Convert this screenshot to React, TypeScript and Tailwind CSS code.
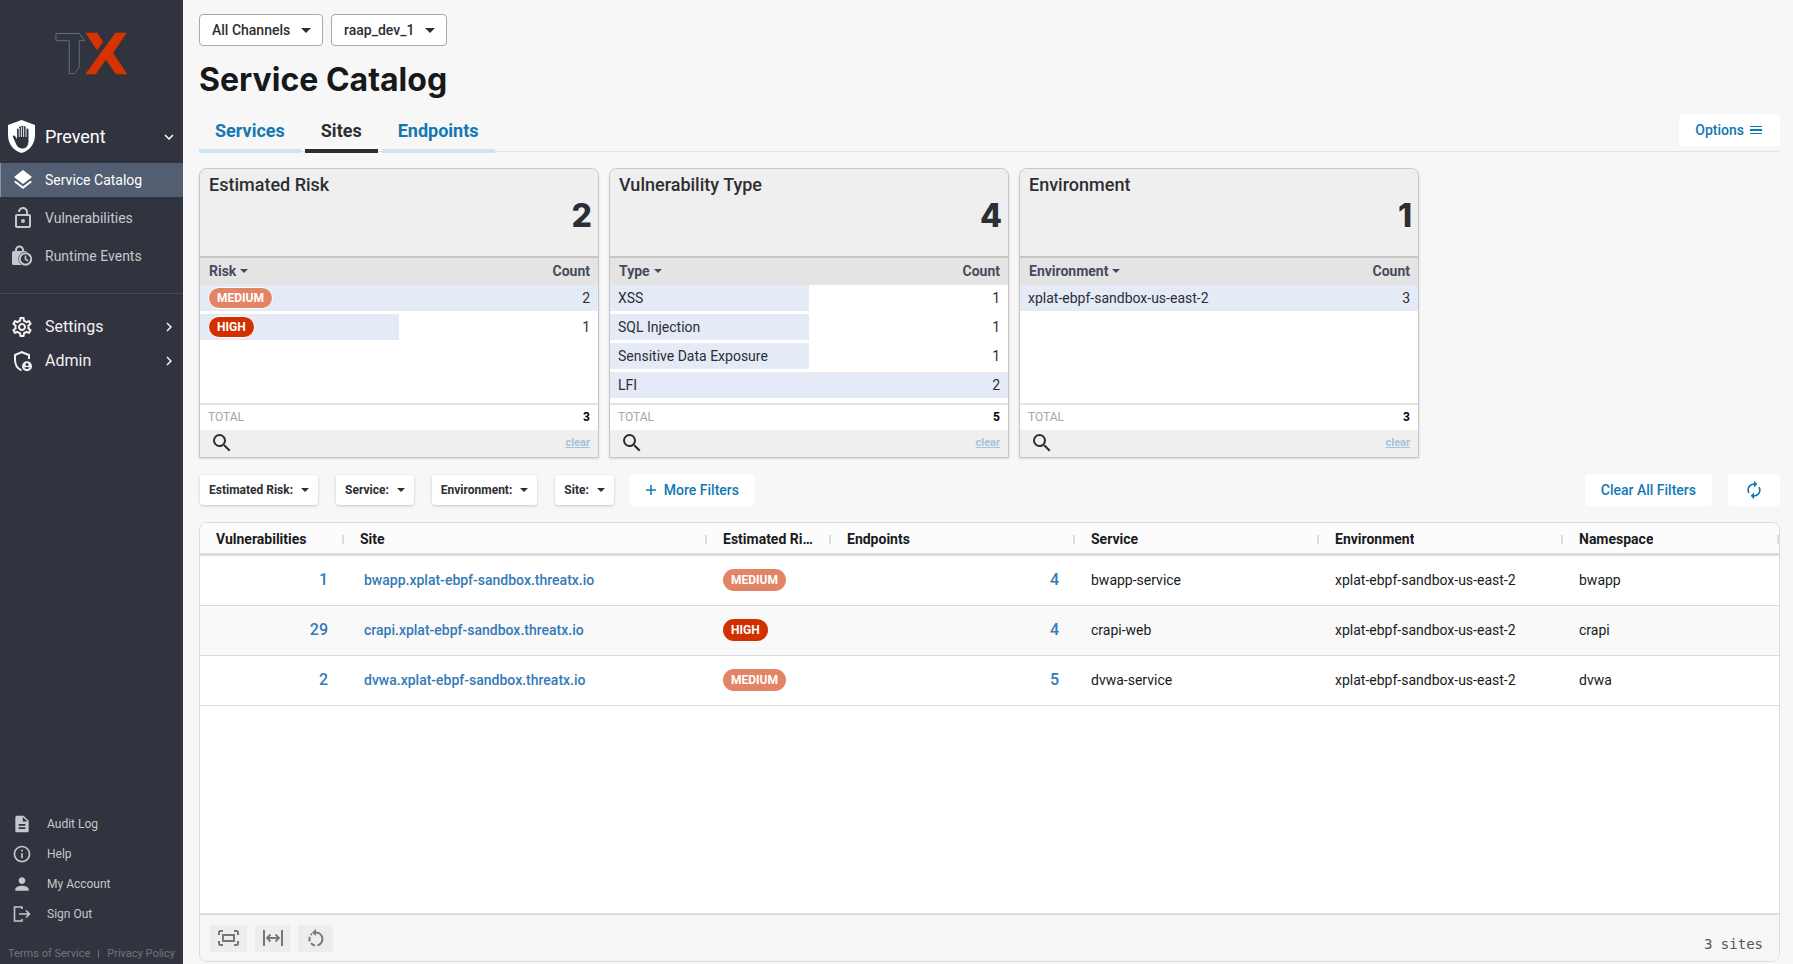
import type { ReactNode } from "react";
import { useState } from "react";
import {
  MdAutorenew,
  MdChevronRight,
  MdDescription,
  MdExpandMore,
  MdInfoOutline,
  MdLayers,
  MdOutlineLockOpen,
  MdOutlineSettings,
  MdPerson,
  MdSearch,
} from "react-icons/md";

type Level = "MEDIUM" | "HIGH";

const siteRows: { vulns: number; site: string; risk: Level; endpoints: number; service: string; env: string; ns: string }[] = [
  { vulns: 1, site: "bwapp.xplat-ebpf-sandbox.threatx.io", risk: "MEDIUM", endpoints: 4, service: "bwapp-service", env: "xplat-ebpf-sandbox-us-east-2", ns: "bwapp" },
  { vulns: 29, site: "crapi.xplat-ebpf-sandbox.threatx.io", risk: "HIGH", endpoints: 4, service: "crapi-web", env: "xplat-ebpf-sandbox-us-east-2", ns: "crapi" },
  { vulns: 2, site: "dvwa.xplat-ebpf-sandbox.threatx.io", risk: "MEDIUM", endpoints: 5, service: "dvwa-service", env: "xplat-ebpf-sandbox-us-east-2", ns: "dvwa" },
];

const facets = [
  {
    title: "Estimated Risk",
    column: "Risk",
    items: [
      { label: "MEDIUM", count: 2, badge: true },
      { label: "HIGH", count: 1, badge: true },
    ],
  },
  {
    title: "Vulnerability Type",
    column: "Type",
    items: [
      { label: "XSS", count: 1 },
      { label: "SQL Injection", count: 1 },
      { label: "Sensitive Data Exposure", count: 1 },
      { label: "LFI", count: 2 },
    ],
  },
  {
    title: "Environment",
    column: "Environment",
    items: [{ label: "xplat-ebpf-sandbox-us-east-2", count: 3 }],
  },
];

const columns = [
  { name: "Vulnerabilities", width: "w-[144px]" },
  { name: "Site", width: "w-[363px]" },
  { name: "Estimated Risk", width: "w-[124px]" },
  { name: "Endpoints", width: "w-[244px]" },
  { name: "Service", width: "w-[244px]" },
  { name: "Environment", width: "w-[244px]" },
  { name: "Namespace", width: "" },
];

function Logo() {
  return (
    <svg viewBox="163 95 220 129" className="w-[73px] h-[43px]" role="img" aria-label="TX">
      <path d="M166 99H236L252 121H236V202L221 220H206V121H166Z" fill="none" stroke="#57757d" strokeWidth="3" />
      <path d="M254 97H290L308 125L290 150Z" fill="#d63301" />
      <path d="M345 97H379L338 159L381 222H347L316 178L286 222H254Z" fill="#d63301" />
    </svg>
  );
}

function ShieldHand() {
  return (
    <svg viewBox="0 0 27 33" className="w-[27px] h-[33px]" aria-hidden="true">
      <path d="M13.5 0L27 5V15C27 24 21.500 30.800 13.500 33C5.500 30.800 0 24 0 15V5Z" fill="#fff" />
      <path
        d="M9 19V9.500a1 1 0 0 1 2 0V7.500a1 1 0 0 1 2.200 0V6.800a1 1 0 0 1 2.200 0V7.500a1 1 0 0 1 2.400 0V9.800a1 1 0 0 1 2.700 0V21C20.500 26 18 28.500 14.500 28.500C11.500 28.500 9.500 27 8.300 24.500L4.800 16.800C4.800 15.300 6.400 15.300 7.200 16.300Z"
        fill="#31333f"
      />
      <path d="M11.200 8V17M13.400 7V17M15.600 7V17M18 8.500V17" stroke="#fff" strokeWidth="0.900" />
    </svg>
  );
}

function LockClockIcon() {
  return (
    <svg viewBox="0 0 24 24" width="24" height="24" fill="none" stroke="currentColor" aria-hidden="true">
      <path d="M5 8V6A3.500 3.500 0 0 1 12 6V8" strokeWidth="2" />
      <rect x="1" y="7" width="15" height="14" rx="1.500" fill="currentColor" stroke="none" />
      <circle cx="14.500" cy="15" r="7.200" fill="#31333f" stroke="none" />
      <circle cx="14.500" cy="15" r="5.700" fill="#31333f" strokeWidth="2" />
      <path d="M14.500 11.500V15.200L17 16.700" strokeWidth="1.600" />
    </svg>
  );
}

function ShieldUserIcon() {
  return (
    <svg viewBox="0 0 24 24" width="24" height="24" fill="none" stroke="currentColor" strokeWidth="2" aria-hidden="true">
      <path d="M19 10V6L11.800 3.200L5 6V10.500C5 15.500 7.300 19.500 11.500 21.300" />
      <circle cx="17" cy="17.200" r="5" fill="currentColor" stroke="none" />
      <circle cx="17" cy="15.600" r="1.500" fill="#31333f" stroke="none" />
      <path d="M14.200 18.700Q17 17.300 19.800 18.700Q17 21.500 14.200 18.700Z" fill="#31333f" stroke="none" />
    </svg>
  );
}

function SignOutIcon() {
  return (
    <svg viewBox="0 0 20 20" width="20" height="20" fill="none" stroke="currentColor" strokeWidth="1.600" aria-hidden="true">
      <path d="M10 5V3H2.500V17H10V15M7 10H17.500M14 6.500L17.500 10L14 13.500" />
    </svg>
  );
}

function ResetIcon() {
  return (
    <svg viewBox="0 0 18 18" width="18" height="18" fill="none" stroke="currentColor" strokeWidth="2" aria-hidden="true">
      <path d="M8 3.500H9A6.500 6.500 0 0 1 10.500 16.300" />
      <path d="M8 16.400A6.500 6.500 0 0 1 4 14.200M2.800 12.300A6.500 6.500 0 0 1 2.800 7.900M3.800 6A6.500 6.500 0 0 1 5 4.800" />
      <path d="M9 0V7L5 3.500Z" fill="currentColor" stroke="none" />
    </svg>
  );
}

function Caret({ className }: { className: string }) {
  return (
    <svg viewBox="0 0 10 5" className={className} fill="currentColor" aria-hidden="true">
      <path d="M0 0H10L5 5Z" />
    </svg>
  );
}

function Badge({ level, outlined }: { level: string; outlined?: boolean }) {
  return (
    <span
      className={`inline-flex h-[22px] items-center rounded-full px-2 text-xs font-bold text-white ${
        outlined ? "border border-white" : ""
      } ${level === "HIGH" ? "bg-[#d13000]" : "bg-[#e48467]"}`}
    >
      {level}
    </span>
  );
}

function ChannelSelect({ label, value }: { label: string; value: string }) {
  return (
    <div className="relative">
      <select
        aria-label={label}
        className="h-8 appearance-none rounded border border-[#a9a9a9] bg-white pl-3 pr-[31px] text-sm font-medium text-[#2d2e33]"
      >
        <option>{value}</option>
      </select>
      <Caret className="pointer-events-none absolute right-3 top-[14px] h-[5px] w-[10px] text-[#2d2e33]" />
    </div>
  );
}

function SubItem({ icon, label, active }: { icon: ReactNode; label: string; active?: boolean }) {
  return (
    <a
      href="#"
      className={`flex h-[34px] items-center border-l pl-[10px] text-sm ${
        active ? "border-[#8a93a5] bg-[#535e73] text-white" : "border-transparent text-[#c6c7ca]"
      }`}
    >
      <span className="flex w-[34px] items-center text-[24px]">{icon}</span>
      {label}
    </a>
  );
}

function Section({ icon, label }: { icon: ReactNode; label: string }) {
  return (
    <button className="flex h-[34px] w-full items-center pl-[10px] pr-[5px] text-base text-[#f1f1f2]">
      <span className="flex w-[35px] items-center text-[24px]">{icon}</span>
      <span className="flex-1 text-left">{label}</span>
      <MdChevronRight className="text-[18px]" />
    </button>
  );
}

function FooterLink({ icon, label }: { icon: ReactNode; label: string }) {
  return (
    <a href="#" className="flex h-[30px] items-center pl-3 text-xs text-[#c6c7ca]">
      <span className="flex w-[35px] items-center text-[20px]">{icon}</span>
      {label}
    </a>
  );
}

function Sidebar() {
  return (
    <aside className="flex w-[183px] shrink-0 flex-col bg-[#31333f]">
      <div className="flex justify-center pt-8">
        <Logo />
      </div>
      <nav className="mt-[45px] flex flex-1 flex-col">
        <button className="flex h-[33px] items-center pl-2 pr-[5px] text-lg text-white">
          <span className="w-[37px]">
            <ShieldHand />
          </span>
          <span className="flex-1 text-left">Prevent</span>
          <MdExpandMore className="text-[18px]" />
        </button>
        <div className="mt-[10px] flex flex-col gap-1 border-b border-[#454754] pb-5">
          <SubItem active icon={<MdLayers />} label="Service Catalog" />
          <SubItem icon={<MdOutlineLockOpen />} label="Vulnerabilities" />
          <SubItem icon={<LockClockIcon />} label="Runtime Events" />
        </div>
        <div className="mt-4">
          <Section icon={<MdOutlineSettings />} label="Settings" />
          <Section icon={<ShieldUserIcon />} label="Admin" />
        </div>
        <div className="mt-auto">
          <FooterLink icon={<MdDescription />} label="Audit Log" />
          <FooterLink icon={<MdInfoOutline />} label="Help" />
          <FooterLink icon={<MdPerson />} label="My Account" />
          <FooterLink icon={<SignOutIcon />} label="Sign Out" />
        </div>
      </nav>
      <div className="flex items-center justify-between px-2 pb-[2px] pt-[17px] text-[11px] leading-4 text-[#73747b]">
        <a href="#">Terms of Service</a>
        <span className="h-2 w-px bg-[#73747b]" />
        <a href="#">Privacy Policy</a>
      </div>
    </aside>
  );
}

function FacetCard({ facet }: { facet: (typeof facets)[number] }) {
  const max = Math.max(...facet.items.map((i) => i.count));
  const total = facet.items.reduce((sum, i) => sum + i.count, 0);

  return (
    <section className="flex w-[400px] flex-col overflow-hidden rounded-t-lg border border-[#c6c6c6] bg-white shadow-sm">
      <div className="h-[89px] border-b-2 border-[#c6c6c6] bg-[#efefef] pl-[9px] pr-[6px] pt-1">
        <h2 className="text-lg leading-6 font-medium text-[#2d2e33]">{facet.title}</h2>
        <div className="text-right font-[Inter] text-[32px] leading-[38px] font-extrabold text-[#2d2e33]">{facet.items.length}</div>
      </div>
      <div className="min-h-[145px]">
        <table className="w-full text-sm text-[#2d2e33]">
          <thead className="bg-[#e4e4e4]">
            <tr className="h-[27px] text-[#474b5c]">
              <th className="pt-0 pb-px pl-[9px] text-left font-bold">
                <span className="flex items-center gap-1">
                  {facet.column}
                  <Caret className="h-[4px] w-[8px]" />
                </span>
              </th>
              <th className="pt-0 pr-2 pb-px text-right font-bold">Count</th>
            </tr>
          </thead>
          <tbody>
            {facet.items.map((item) => (
              <tr
                key={item.label}
                className="h-[29px] bg-linear-to-r from-[#e4ebf7] to-[#e4ebf7] bg-no-repeat"
                style={{ backgroundSize: `${(item.count / max) * 100}% 26px` }}
              >
                <td className="pt-0 pb-[3px] pl-2 leading-[26px]">
                  {"badge" in item ? (
                    <span className="flex h-[26px] items-center">
                      <Badge level={item.label} outlined />
                    </span>
                  ) : (
                    item.label
                  )}
                </td>
                <td className="pt-0 pr-2 pb-[3px] text-right leading-[26px]">{item.count}</td>
              </tr>
            ))}
          </tbody>
        </table>
      </div>
      <div className="flex h-[27px] items-center justify-between border-t-2 border-[#e4e4e4] px-2 pb-px text-xs">
        <span className="text-[#a3a6ab]">TOTAL</span>
        <span className="font-bold text-black">{total}</span>
      </div>
      <div className="flex h-[27px] items-center justify-between bg-[#efefef] pl-[10px] pr-2 pb-px">
        <button aria-label={`Search ${facet.title}`} className="text-[24px] text-[#2d2e33]">
          <MdSearch />
        </button>
        <button className="text-[11px] font-bold text-[#a3c4da] underline">clear</button>
      </div>
    </section>
  );
}

function FilterButton({ label }: { label: string }) {
  return (
    <button className="flex h-[30px] items-center gap-2 rounded-[3px] bg-white px-[9px] text-xs font-bold text-[#2d2e33] shadow-[0_1px_3px_#00000033]">
      {label}
      <Caret className="h-[4px] w-[8px]" />
    </button>
  );
}

function SitesTable() {
  const toolButton = "flex h-[27px] items-center justify-center bg-[#ededed]";

  return (
    <div className="mt-4 flex flex-1 flex-col overflow-hidden rounded-lg border border-[#dcdcdc] bg-white">
      <table className="w-full table-fixed border-separate border-spacing-0 text-sm text-[#181b1e]">
        <thead>
          <tr className="h-[33px]">
            {columns.map((col) => (
              <th key={col.name} className={`${col.width} border-b-3 border-[#dcdcdc] bg-[#fcfcfc] px-0 pt-[2px] pb-0 text-left font-bold`}>
                <span className="flex items-center justify-between pl-4">
                  <span className="truncate">{col.name}</span>
                  <span className="ml-4 h-[9px] w-[2px] shrink-0 bg-[#dcdcdc]" />
                </span>
              </th>
            ))}
          </tr>
        </thead>
        <tbody className="[&_td]:border-b [&_td]:border-[#dcdcdc] [&_td]:pb-[2px]">
          {siteRows.map((row) => (
            <tr key={row.site} className="h-[50px] even:bg-[#f9f9f9]">
              <td className="px-4 text-right text-base font-medium text-[#337ab7]">{row.vulns}</td>
              <td className="px-5">
                <a href="#" className="font-medium text-[#337ab7]">{row.site}</a>
              </td>
              <td className="px-4">
                <span className="flex">
                  <Badge level={row.risk} />
                </span>
              </td>
              <td className="px-4 text-right text-base font-medium text-[#337ab7]">{row.endpoints}</td>
              <td className="px-4">{row.service}</td>
              <td className="px-4">{row.env}</td>
              <td className="px-4">{row.ns}</td>
            </tr>
          ))}
        </tbody>
      </table>
      <div className="mt-auto flex h-[48px] items-center justify-between border-t-2 border-[#dcdcdc] bg-[#f6f6f6] px-[10px]">
        <div className="flex gap-2 text-[#777]">
          <button aria-label="Fit to screen" className={`${toolButton} w-[37px]`}>
            <svg viewBox="0 0 21 16" className="h-4 w-[21px]" fill="none" stroke="currentColor" strokeWidth="2" aria-hidden="true">
              <path d="M1 5V2.500Q1 1 2.500 1H5M16 1H18.500Q20 1 20 2.500V5M20 11V13.500Q20 15 18.500 15H16M5 15H2.500Q1 15 1 13.500V11" />
              <rect x="5" y="5" width="11" height="6" />
            </svg>
          </button>
          <button aria-label="Fit columns" className={`${toolButton} w-[35px]`}>
            <svg viewBox="0 0 20 16" className="h-4 w-5" fill="none" stroke="currentColor" strokeWidth="2" aria-hidden="true">
              <path d="M1 0V16M19 0V16M4 8H16" />
              <path d="M7.500 4.500L4 8L7.500 11.500M12.500 4.500L16 8L12.500 11.500" strokeWidth="1.800" />
            </svg>
          </button>
          <button aria-label="Reset" className={`${toolButton} w-[35px]`}>
            <ResetIcon />
          </button>
        </div>
        <span className="mt-3 mr-[6px] font-['DejaVu_Sans_Mono',monospace] text-sm text-[#555]">{siteRows.length} sites</span>
      </div>
    </div>
  );
}

export default function App() {
  const [tab, setTab] = useState("Sites");
  const linkButton = "flex h-8 items-center rounded bg-white text-sm font-medium text-[#1378b2]";

  return (
    <div className="flex min-h-screen bg-[#f7f7f7] font-[Roboto,sans-serif]">
      <Sidebar />
      <main className="flex min-w-0 flex-1 flex-col pt-[14px] pr-[13px] pb-[2px] pl-4">
        <div className="flex gap-2">
          <ChannelSelect label="Channel" value="All Channels" />
          <ChannelSelect label="Tenant" value="raap_dev_1" />
        </div>
        <h1 className="mt-3 font-[Inter] text-[32px] leading-[44px] font-bold text-[#17181a]">Service Catalog</h1>

        <div className="mt-[10px] flex items-start justify-between border-b border-[#e4e4e4]">
          <div role="tablist" className="-mb-[2px] flex gap-1">
            {["Services", "Sites", "Endpoints"].map((name) => (
              <button
                key={name}
                role="tab"
                aria-selected={tab === name}
                onClick={() => setTab(name)}
                className={`h-[41px] border-b-4 px-4 text-lg font-bold ${
                  tab === name ? "border-[#2d2e33] text-[#2d2e33]" : "border-[#cfe4f0] text-[#1378b2]"
                }`}
              >
                {name}
              </button>
            ))}
          </div>
          <button className={`${linkButton} mt-[2px] gap-[6px] pl-4 pr-[18px]`}>
            Options
            <svg viewBox="0 0 12 8" className="h-2 w-3" fill="currentColor" aria-hidden="true">
              <path d="M0 0H12V1H0ZM0 3H12V5H0ZM0 7H12V8H0Z" />
            </svg>
          </button>
        </div>

        <div className="mt-4 flex flex-wrap gap-[10px]">
          {facets.map((facet) => (
            <FacetCard key={facet.title} facet={facet} />
          ))}
        </div>

        <div className="mt-4 flex flex-wrap items-center gap-4">
          <div className="flex items-center gap-[18px] pl-px">
            <FilterButton label="Estimated Risk:" />
            <FilterButton label="Service:" />
            <FilterButton label="Environment:" />
            <FilterButton label="Site:" />
          </div>
          <button className={`${linkButton} gap-2 px-4`}>
            <svg viewBox="0 0 10 10" className="h-[10px] w-[10px]" stroke="currentColor" strokeWidth="1.500" aria-hidden="true">
              <path d="M5 0V10M0 5H10" />
            </svg>
            More Filters
          </button>
          <button className={`${linkButton} ml-auto px-4`}>Clear All Filters</button>
          <button aria-label="Refresh" className={`${linkButton} w-[52px] justify-center`}>
            <MdAutorenew className="shrink-0 text-[20px]" />
          </button>
        </div>

        <SitesTable />
      </main>
    </div>
  );
}
